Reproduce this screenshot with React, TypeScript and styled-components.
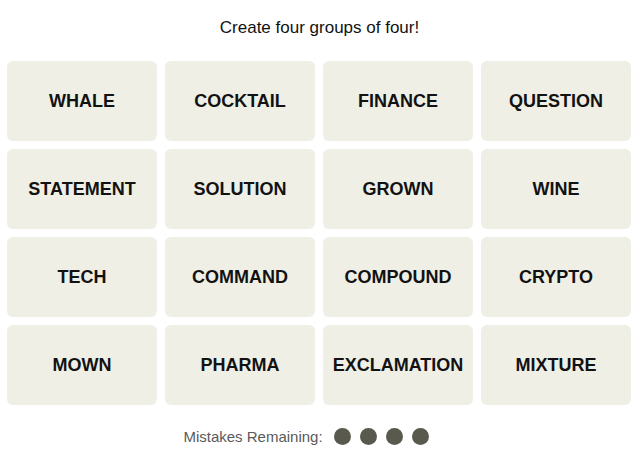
import React from "react";
import styled, { createGlobalStyle } from "styled-components";

const GlobalStyle = createGlobalStyle`
  body {
    margin: 0;
    background: #ffffff;
    font-family: "Liberation Sans", Arial, sans-serif;
  }
`;

const Page = styled.div`
  width: 639px;
  display: flex;
  flex-direction: column;
  align-items: center;
`;

const Prompt = styled.p`
  margin: 18px 0 0;
  height: 20px;
  line-height: 20px;
  font-size: 17px;
  color: #121212;
`;

const Board = styled.div`
  margin: 23px 8px 0 7px;
  align-self: flex-start;
  display: grid;
  grid-template-columns: repeat(4, 150px);
  grid-auto-rows: 80px;
  gap: 8px;
`;

const Tile = styled.button`
  border: none;
  border-radius: 6px;
  background: #efefe6;
  color: #121212;
  font-family: "Liberation Sans", Arial, sans-serif;
  font-weight: 700;
  font-size: 18px;
  text-transform: uppercase;
  display: flex;
  align-items: center;
  justify-content: center;
  padding: 0;
  cursor: pointer;
`;

const Mistakes = styled.div`
  margin-top: 23px;
  padding-right: 27px;
  display: flex;
  align-items: center;
  gap: 11px;
  font-size: 15px;
  color: #5a5a5a;
`;

const Dots = styled.div`
  display: flex;
  gap: 9px;
`;

const Dot = styled.span`
  width: 17px;
  height: 17px;
  border-radius: 50%;
  background: #5a594e;
`;

const words = [
  "WHALE", "COCKTAIL", "FINANCE", "QUESTION",
  "STATEMENT", "SOLUTION", "GROWN", "WINE",
  "TECH", "COMMAND", "COMPOUND", "CRYPTO",
  "MOWN", "PHARMA", "EXCLAMATION", "MIXTURE",
];

export default function App() {
  return (
    <>
      <GlobalStyle />
      <Page>
        <Prompt>Create four groups of four!</Prompt>
        <Board>
          {words.map((w) => (
            <Tile key={w}>{w}</Tile>
          ))}
        </Board>
        <Mistakes>
          <span>Mistakes Remaining:</span>
          <Dots>
            {[0, 1, 2, 3].map((i) => (
              <Dot key={i} />
            ))}
          </Dots>
        </Mistakes>
      </Page>
    </>
  );
}
